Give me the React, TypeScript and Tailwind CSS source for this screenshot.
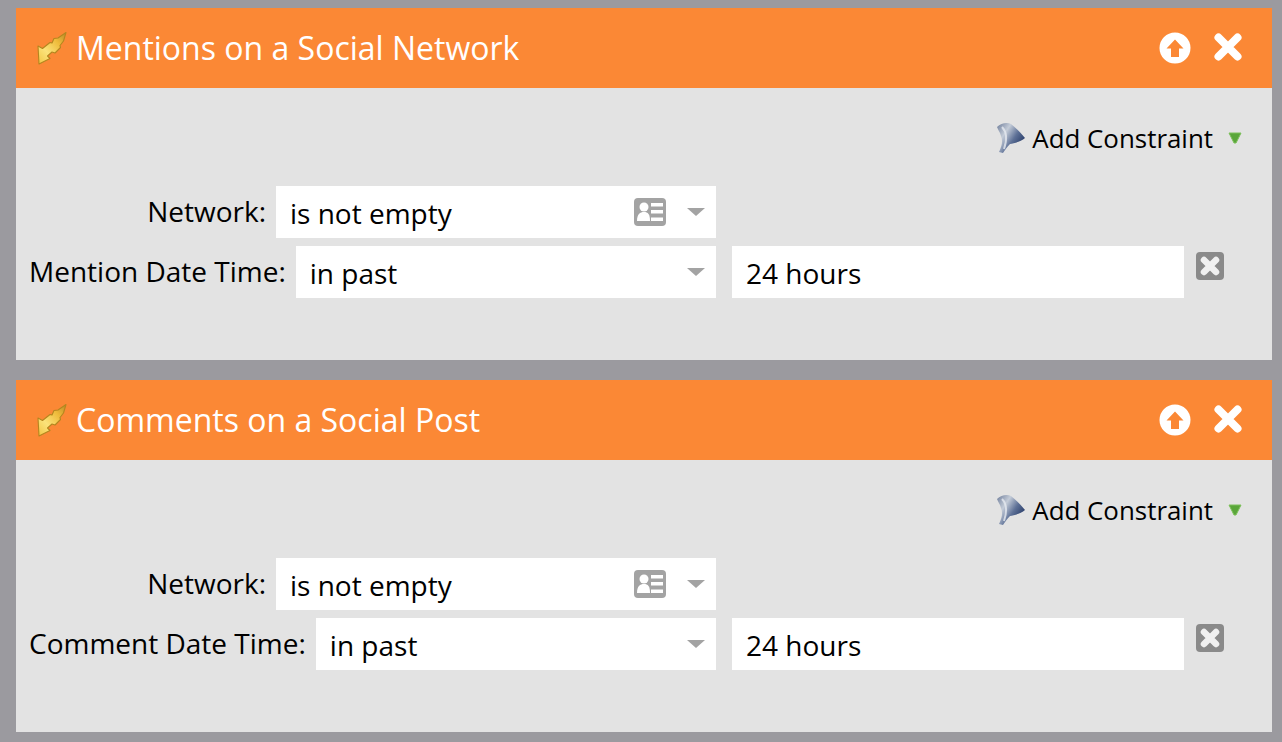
const font = "font-['Open_Sans',sans-serif]"

function BoltIcon({ id }: { id: string }) {
  return (
    <svg width="32" height="36" viewBox="36 34 32 36" className="shrink-0">
      <defs>
        <linearGradient id={id} x1="0" y1="1" x2="1" y2="0">
          <stop offset="0" stopColor="#f0c544" />
          <stop offset="0.35" stopColor="#fbe27a" />
          <stop offset="0.7" stopColor="#eebb3a" />
          <stop offset="1" stopColor="#b98a2a" />
        </linearGradient>
      </defs>
      <path
        d="M66 36.5 L63.5 45 L60 49.5 L60.5 51.5 L55 57 L52 56 L47.5 60 L50 62.5 L39 68 L38 50 L42.5 52.5 L50 46.5 L52 47 L54 42.5 L58 42 Z"
        fill={`url(#${id})`}
        stroke="#b4861f"
        strokeWidth="1.1"
        strokeLinejoin="round"
      />
    </svg>
  )
}

function UpIcon() {
  return (
    <svg width="32" height="32" viewBox="0 0 32 32" className="shrink-0">
      <circle cx="16" cy="16" r="15.5" fill="#fff" />
      <path d="M16 7.5 L24.5 16.5 L20 16.5 L20 25 L12 25 L12 16.5 L7.5 16.5 Z" fill="#fb8835" />
    </svg>
  )
}

function CloseIcon() {
  return (
    <svg width="30" height="30" viewBox="0 0 30 30" className="shrink-0">
      <path d="M4.5 4.5 L23.5 23.5 M23.5 4.5 L4.5 23.5" stroke="#fff" strokeWidth="8" strokeLinecap="round" />
    </svg>
  )
}

function FunnelIcon({ id }: { id: string }) {
  return (
    <svg width="30" height="32" viewBox="0 0 30 32" className="shrink-0">
      <defs>
        <linearGradient id={id} x1="0" y1="0" x2="1" y2="0.7">
          <stop offset="0" stopColor="#6d7c99" />
          <stop offset="0.35" stopColor="#c4ccd8" />
          <stop offset="0.65" stopColor="#5d7096" />
          <stop offset="1" stopColor="#1f3361" />
        </linearGradient>
      </defs>
      <path
        d="M1 5 C5 1 11 0 15 2 C20 6 25 11 29 16 C25 20 18 21 14 22 C11 25 9 28 7 31 L3 30 C6 24 7 19 5 14 C4 10 2 8 1 5 Z"
        fill={`url(#${id})`}
      />
      <path d="M6 5 C10 9 12 15 8 27" stroke="#e6eaf0" strokeWidth="2" fill="none" opacity="0.8" />
    </svg>
  )
}

function CardIcon() {
  return (
    <svg width="32" height="28" viewBox="0 0 32 28" className="shrink-0">
      <rect width="32" height="28" rx="4" fill="#a3a3a3" />
      <circle cx="10" cy="9" r="4.5" fill="#fff" />
      <path d="M3 23 C3 16 6 14 10 14 C14 14 16 16 16 23 Z" fill="#fff" />
      <path d="M17 5 H29 V8.5 H17 Z M17 12 H29 V15.5 H17 Z M17 19.5 H29 V23 H17 Z" fill="#fff" />
    </svg>
  )
}

function Caret() {
  return <div className="h-0 w-0 border-x-[9px] border-t-[8px] border-x-transparent border-t-[#a3a3a3]" />
}

function GreenCaret() {
  return (
    <svg width="14" height="12" viewBox="0 0 14 12" className="shrink-0">
      <path d="M1 1 H13 L8 11 H6 Z" fill="#5aa63a" stroke="#7cc05a" strokeWidth="1" strokeLinejoin="round" />
    </svg>
  )
}

function RemoveIcon() {
  return (
    <svg width="30" height="30" viewBox="0 0 30 30" className="shrink-0">
      <rect x="1" y="1" width="28" height="28" rx="4" fill="#8a8a8a" />
      <path d="M9 9 L21 21 M21 9 L9 21" stroke="#f0f0f0" strokeWidth="6.5" strokeLinecap="round" />
    </svg>
  )
}

function FilterPanel({ id, title, dateLabel }: { id: string; title: string; dateLabel: string }) {
  return (
    <div className="flex h-[352px] flex-col">
      <div className="flex h-20 items-center bg-[#fb8835] pl-5 pr-[28px] text-white">
        <BoltIcon id={`${id}-bolt`} />
        <span className="ml-2 flex-1 text-[32px] leading-none">{title}</span>
        <UpIcon />
        <div className="ml-[23px]">
          <CloseIcon />
        </div>
      </div>

      <div className="flex-1 bg-[#e3e3e3] text-[28px] leading-none text-black">
        <div className="flex items-center justify-end pr-[30px] pt-[34px]">
          <FunnelIcon id={`${id}-funnel`} />
          <span className="ml-[6px] mr-[15px] pt-[2px] text-[25.9px]">Add Constraint</span>
          <GreenCaret />
        </div>

        <div className="mt-8 flex h-[52px] w-[700px] items-center">
          <span className="w-[250px] pb-[2px] text-right">Network:</span>
          <div className="ml-[10px] flex h-full flex-1 items-center bg-white pl-[14px] pr-[11px]">
            <span className="flex-1 pt-[2px]">is not empty</span>
            <CardIcon />
            <div className="ml-[21px]">
              <Caret />
            </div>
          </div>
        </div>

        <div className="mt-2 flex h-[52px] items-center">
          <div className="flex h-full w-[700px] items-center pl-[13px]">
            <span className="pb-[2px]">{dateLabel}</span>
            <div className="ml-[10px] flex h-full flex-1 items-center bg-white pl-[14px] pr-[11px]">
              <span className="flex-1 pt-[2px]">in past</span>
              <Caret />
            </div>
          </div>
          <div className="ml-4 flex h-full w-[452px] items-center bg-white pl-[14px]">
            <span className="pt-[2px]">24 hours</span>
          </div>
          <div className="-mt-3 ml-[11px]">
            <RemoveIcon />
          </div>
        </div>
      </div>
    </div>
  )
}

export default function App() {
  return (
    <div className={`${font} flex h-[742px] w-[1282px] flex-col gap-5 bg-[#9b9a9f] pb-[10px] pl-4 pr-[10px] pt-2`}>
      <FilterPanel id="mentions" title="Mentions on a Social Network" dateLabel="Mention Date Time:" />
      <FilterPanel id="comments" title="Comments on a Social Post" dateLabel="Comment Date Time:" />
    </div>
  )
}
